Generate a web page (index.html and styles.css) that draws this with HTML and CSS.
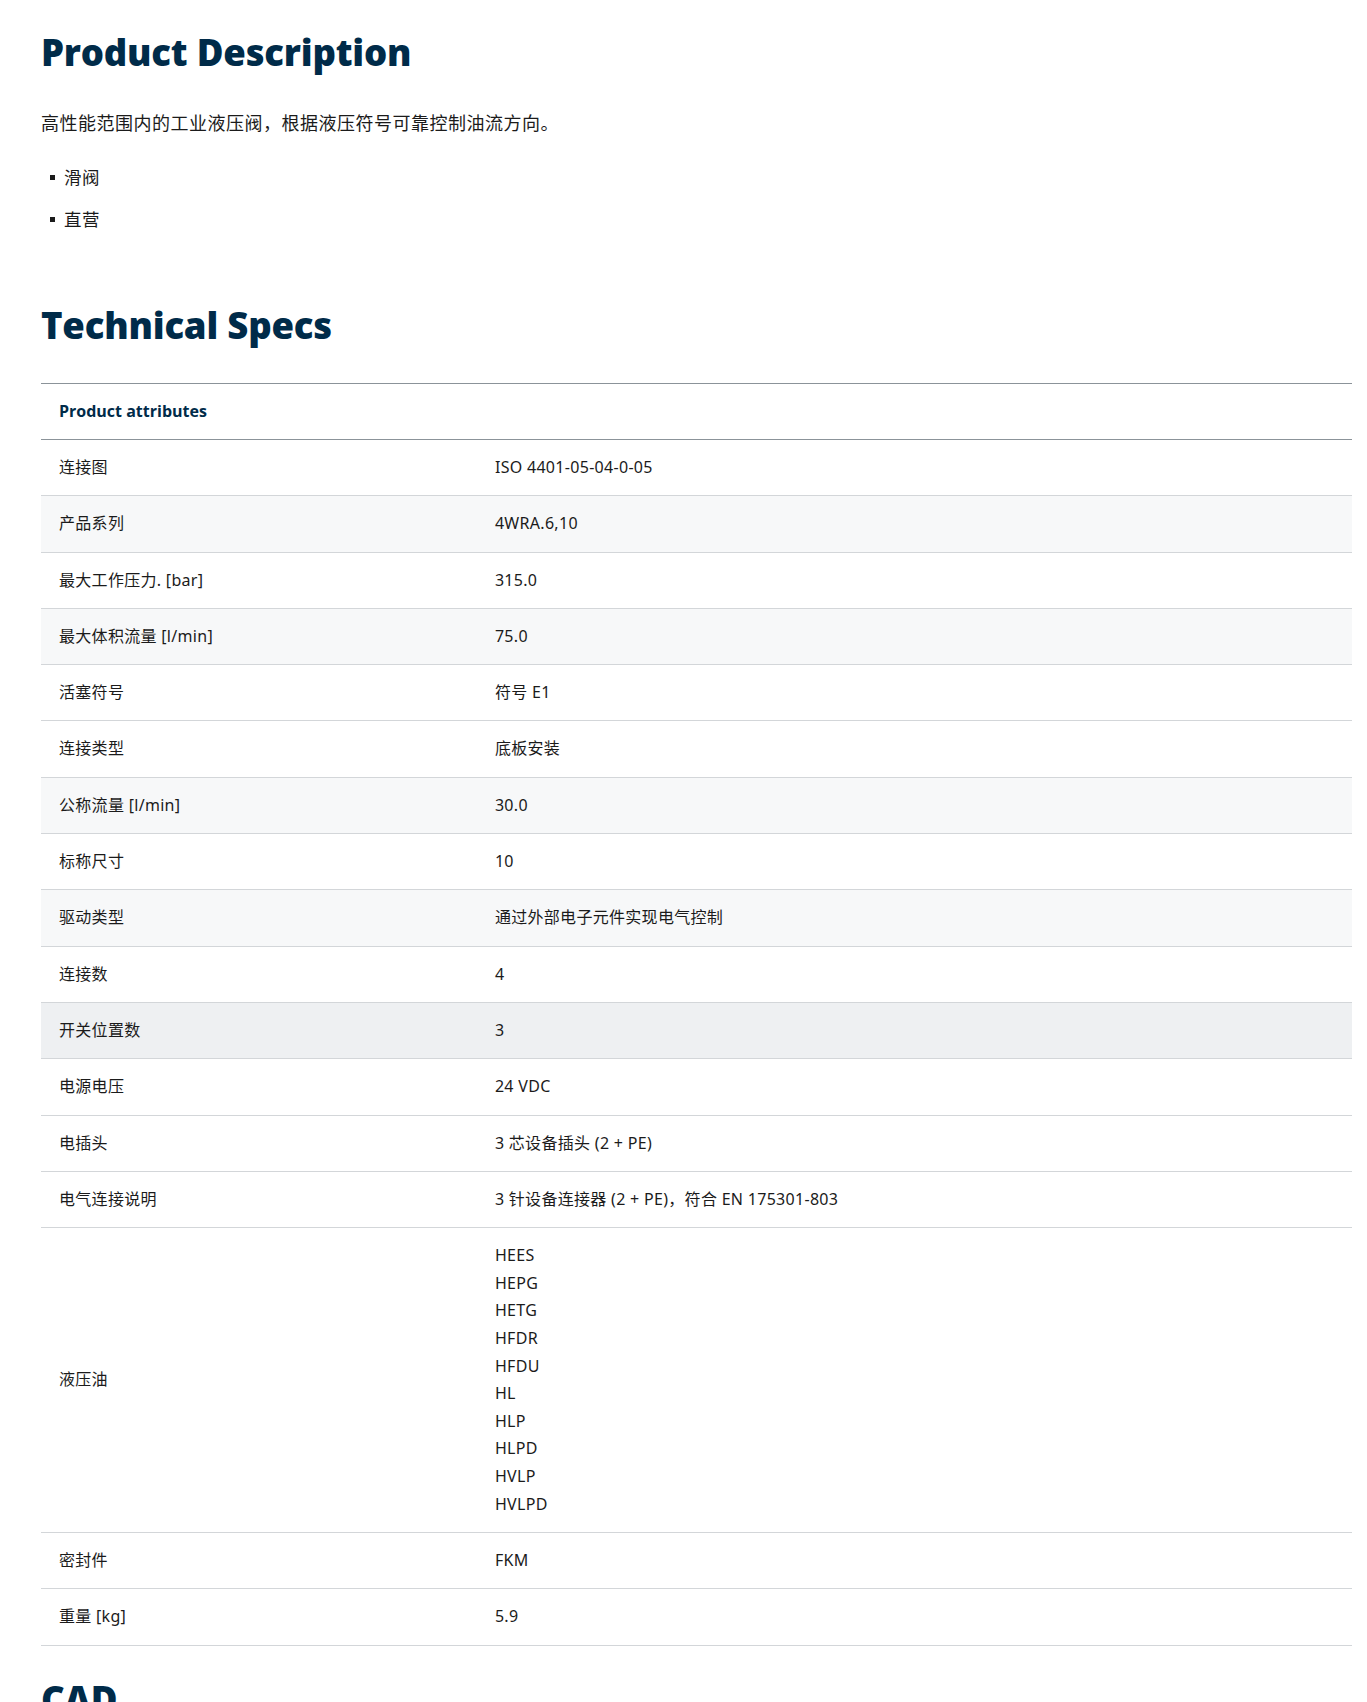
FILE: index.html
```html
<!DOCTYPE html>
<html lang="zh">
<head>
<meta charset="utf-8">
<title>Product Description</title>
<link rel="stylesheet" href="styles.css">
</head>
<body>
<main class="page">
  <section class="section">
    <h2 class="heading">Product Description</h2>
    <p class="lead">高性能范围内的工业液压阀，根据液压符号可靠控制油流方向。</p>
    <ul class="bullets">
      <li>滑阀</li>
      <li>直营</li>
    </ul>
  </section>

  <section class="section">
    <h2 class="heading heading-spaced">Technical Specs</h2>
    <table class="specs">
      <colgroup>
        <col class="col-label">
        <col class="col-value">
      </colgroup>
      <thead>
        <tr><th colspan="2">Product attributes</th></tr>
      </thead>
      <tbody>
        <tr><td>连接图</td><td>ISO 4401-05-04-0-05</td></tr>
        <tr class="shade"><td>产品系列</td><td>4WRA.6,10</td></tr>
        <tr><td>最大工作压力. [bar]</td><td>315.0</td></tr>
        <tr class="shade"><td>最大体积流量 [l/min]</td><td>75.0</td></tr>
        <tr><td>活塞符号</td><td>符号 E1</td></tr>
        <tr><td>连接类型</td><td>底板安装</td></tr>
        <tr class="shade"><td>公称流量 [l/min]</td><td>30.0</td></tr>
        <tr><td>标称尺寸</td><td>10</td></tr>
        <tr class="shade"><td>驱动类型</td><td>通过外部电子元件实现电气控制</td></tr>
        <tr><td>连接数</td><td>4</td></tr>
        <tr class="hover"><td>开关位置数</td><td>3</td></tr>
        <tr><td>电源电压</td><td>24 VDC</td></tr>
        <tr><td>电插头</td><td>3 芯设备插头 (2 + PE)</td></tr>
        <tr><td>电气连接说明</td><td>3 针设备连接器 (2 + PE)，符合 EN 175301-803</td></tr>
        <tr><td>液压油</td><td>
          <div class="multi">
            <span>HEES</span><span>HEPG</span><span>HETG</span><span>HFDR</span><span>HFDU</span><span>HL</span><span>HLP</span><span>HLPD</span><span>HVLP</span><span>HVLPD</span>
          </div>
        </td></tr>
        <tr><td>密封件</td><td>FKM</td></tr>
        <tr><td>重量 [kg]</td><td>5.9</td></tr>
      </tbody>
    </table>
  </section>

  <section class="section">
    <h2 class="heading heading-cad">CAD</h2>
  </section>
</main>
</body>
</html>
```
FILE: styles.css
```css
html, body {
  margin: 0;
  padding: 0;
  background: #ffffff;
}

body {
  font-family: "Noto Sans", "Noto Sans CJK SC", sans-serif;
  color: #1b1b1b;
}

.page {
  padding: 30px 15px 40px 41px;
}

.heading {
  margin: 0;
  font-family: "Open Sans", "Noto Sans CJK SC", sans-serif;
  font-weight: 800;
  font-size: 36.5px;
  line-height: 44px;
  color: #002b49;
  letter-spacing: -0.2px;
}

.heading-spaced {
  margin-top: 70px;
}

.heading-cad {
  margin-top: 31px;
}

.lead {
  margin: 35px 0 0;
  font-size: 18px;
  line-height: 28px;
  letter-spacing: 0.5px;
}

.bullets {
  list-style: none;
  margin: 26px 0 0;
  padding: 0 0 0 9px;
  font-size: 17.5px;
  line-height: 28px;
}

.bullets li {
  display: flex;
  align-items: center;
  margin-bottom: 14px;
  letter-spacing: 0.5px;
}

.bullets li:last-child {
  margin-bottom: 40px;
}

.bullets li::before {
  content: "";
  width: 5px;
  height: 5px;
  background: #1b1b1b;
  margin-right: 9px;
  flex: none;
}

.specs {
  width: 100%;
  margin-top: 36px;
  border-collapse: collapse;
  table-layout: fixed;
  font-size: 16px;
  letter-spacing: 0.3px;
}

.col-label {
  width: 33.25%;
}

.col-value {
  width: 66.75%;
}

.specs th {
  text-align: left;
  font-family: "Open Sans", "Noto Sans CJK SC", sans-serif;
  font-weight: 700;
  font-size: 16px;
  letter-spacing: 0;
  color: #002b49;
  padding: 14px 18px;
  line-height: 27px;
  border-top: 1px solid #8b9399;
  border-bottom: 1px solid #8b9399;
}

.specs td {
  padding: 14px 18px;
  line-height: 27.3px;
  border-bottom: 1px solid #d3d6d9;
  vertical-align: middle;
}

.specs tr.shade td {
  background: #f7f8f9;
}

.specs tr.hover td {
  background: #eef0f2;
}

.multi {
  display: flex;
  flex-direction: column;
  line-height: 27.6px;
}
```
